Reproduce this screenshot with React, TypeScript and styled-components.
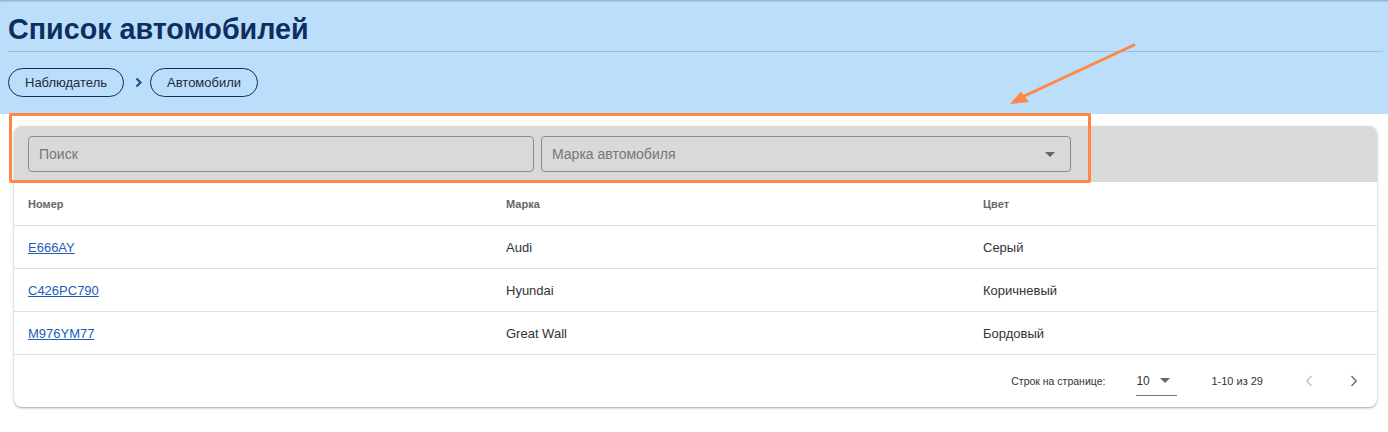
import styled, { createGlobalStyle } from "styled-components"

const GlobalStyle = createGlobalStyle`
  body {
    margin: 0;
    background: #ffffff;
    font-family: "Liberation Sans", Arial, sans-serif;
  }
`

const Page = styled.div`
  position: relative;
  width: 1388px;
  height: 432px;
  overflow: hidden;
`

const Header = styled.header`
  background: #bbdefa;
  padding: 13px 5px 17px 8px;
  box-shadow: inset 0 2px 2px -1px rgba(40, 70, 110, 0.35);
`

const Title = styled.h1`
  margin: 0;
  padding-bottom: 6px;
  border-bottom: 1px solid #9ebfdc;
  font-size: 28.7px;
  line-height: 32px;
  font-weight: 700;
  color: #0d2f5f;
`

const Crumbs = styled.nav`
  display: flex;
  align-items: center;
  margin-top: 16px;
`

const Chip = styled.a`
  display: inline-flex;
  align-items: center;
  box-sizing: border-box;
  height: 29px;
  padding: 0 16px;
  border: 1px solid #0d2f5f;
  border-radius: 15px;
  font-size: 13px;
  color: #1f2b3a;
  text-decoration: none;
`

const Separator = styled.span`
  display: inline-flex;
  margin: 0 7px 0 11px;
  color: #1d4f8a;
`

const Card = styled.section`
  margin: 12px 11px 0 14px;
  border-radius: 8px;
  background: #ffffff;
  overflow: hidden;
  box-shadow: 0 1px 3px rgba(0, 0, 0, 0.28), 0 1px 1px rgba(0, 0, 0, 0.1);
`

const Toolbar = styled.div`
  display: flex;
  gap: 7px;
  box-sizing: border-box;
  height: 56px;
  padding: 10px 14px;
  background: #d9d9d9;
`

const Field = styled.div<{ $width: number }>`
  display: flex;
  align-items: center;
  justify-content: space-between;
  box-sizing: border-box;
  width: ${({ $width }) => $width}px;
  height: 36px;
  padding: 0 15px 0 10px;
  border: 1px solid #8a8a8a;
  border-radius: 4px;
  font-size: 14px;
  color: #777777;
`

const Row = styled.div<{ $head?: boolean }>`
  display: grid;
  grid-template-columns: 478px 477px 1fr;
  align-items: center;
  box-sizing: border-box;
  height: ${({ $head }) => ($head ? 44 : 43)}px;
  border-bottom: 1px solid #e0e0e0;
`

const Cell = styled.div<{ $head?: boolean }>`
  padding-left: 14px;
  font-size: ${({ $head }) => ($head ? 11 : 13)}px;
  font-weight: ${({ $head }) => ($head ? 700 : 400)};
  color: ${({ $head }) => ($head ? "#666666" : "#333333")};
`

const PlateLink = styled.a`
  color: #1c5eb5;
  text-decoration: underline;
`

const Footer = styled.div`
  display: flex;
  align-items: center;
  justify-content: flex-end;
  height: 52px;
  padding-right: 11px;
  font-size: 11px;
  color: #333333;
`

const RowsLabel = styled.span`
  margin-right: 31px;
  font-size: 10.5px;
`

const RowsSelect = styled.div`
  display: flex;
  align-items: center;
  justify-content: space-between;
  box-sizing: border-box;
  width: 41px;
  height: 30px;
  padding-right: 7px;
  margin-right: 34px;
  border-bottom: 1px solid #777777;
  font-size: 12px;
`

const Range = styled.span`
  margin-right: 34px;
`

const PageButton = styled.span<{ $disabled?: boolean }>`
  display: inline-flex;
  align-items: center;
  justify-content: center;
  width: 24px;
  height: 24px;
  color: ${({ $disabled }) => ($disabled ? "#c4c4c4" : "#707070")};

  & + & {
    margin-left: 21px;
  }
`

const Highlight = styled.div`
  position: absolute;
  left: 9px;
  top: 113px;
  width: 1082px;
  height: 70px;
  box-sizing: border-box;
  border: 3px solid #ff8743;
  border-radius: 2px;
  pointer-events: none;
`

const Overlay = styled.svg`
  position: absolute;
  left: 0;
  top: 0;
  pointer-events: none;
`

const Caret = () => (
  <svg width="10" height="5" viewBox="0 0 10 5">
    <path d="M0 0h10L5 5z" fill="#666" />
  </svg>
)

const Chevron = ({ left = false }: { left?: boolean }) => (
  <svg width="8" height="12" viewBox="0 0 8 12">
    <path
      d={left ? "M6.5 1L1.8 6l4.7 5" : "M1.5 1l4.7 5-4.7 5"}
      fill="none"
      stroke="currentColor"
      strokeWidth="1.5"
    />
  </svg>
)

const cars = [
  { plate: "E666AY", brand: "Audi", color: "Серый" },
  { plate: "C426PC790", brand: "Hyundai", color: "Коричневый" },
  { plate: "M976YM77", brand: "Great Wall", color: "Бордовый" },
]

export default function App() {
  return (
    <Page>
      <GlobalStyle />
      <Header>
        <Title>Список автомобилей</Title>
        <Crumbs>
          <Chip>Наблюдатель</Chip>
          <Separator>
            <svg width="8" height="11" viewBox="0 0 8 11">
              <path d="M1.5 1.5l4 4-4 4" fill="none" stroke="currentColor" strokeWidth="2.2" />
            </svg>
          </Separator>
          <Chip>Автомобили</Chip>
        </Crumbs>
      </Header>

      <Card>
        <Toolbar>
          <Field $width={506}>Поиск</Field>
          <Field $width={530}>
            Марка автомобиля
            <Caret />
          </Field>
        </Toolbar>

        <Row $head>
          <Cell $head>Номер</Cell>
          <Cell $head>Марка</Cell>
          <Cell $head>Цвет</Cell>
        </Row>
        {cars.map(car => (
          <Row key={car.plate}>
            <Cell>
              <PlateLink href="#">{car.plate}</PlateLink>
            </Cell>
            <Cell>{car.brand}</Cell>
            <Cell>{car.color}</Cell>
          </Row>
        ))}

        <Footer>
          <RowsLabel>Строк на странице:</RowsLabel>
          <RowsSelect>
            10
            <Caret />
          </RowsSelect>
          <Range>1-10 из 29</Range>
          <PageButton $disabled>
            <Chevron left />
          </PageButton>
          <PageButton>
            <Chevron />
          </PageButton>
        </Footer>
      </Card>

      <Highlight />
      <Overlay width="1388" height="432" viewBox="0 0 1388 432">
        <line x1="1134" y1="45" x2="1020" y2="98" stroke="#ff8743" strokeWidth="3" strokeLinecap="round" />
        <path d="M1010 104L1021 91.5L1029 102z" fill="#ff8743" />
      </Overlay>
    </Page>
  )
}
